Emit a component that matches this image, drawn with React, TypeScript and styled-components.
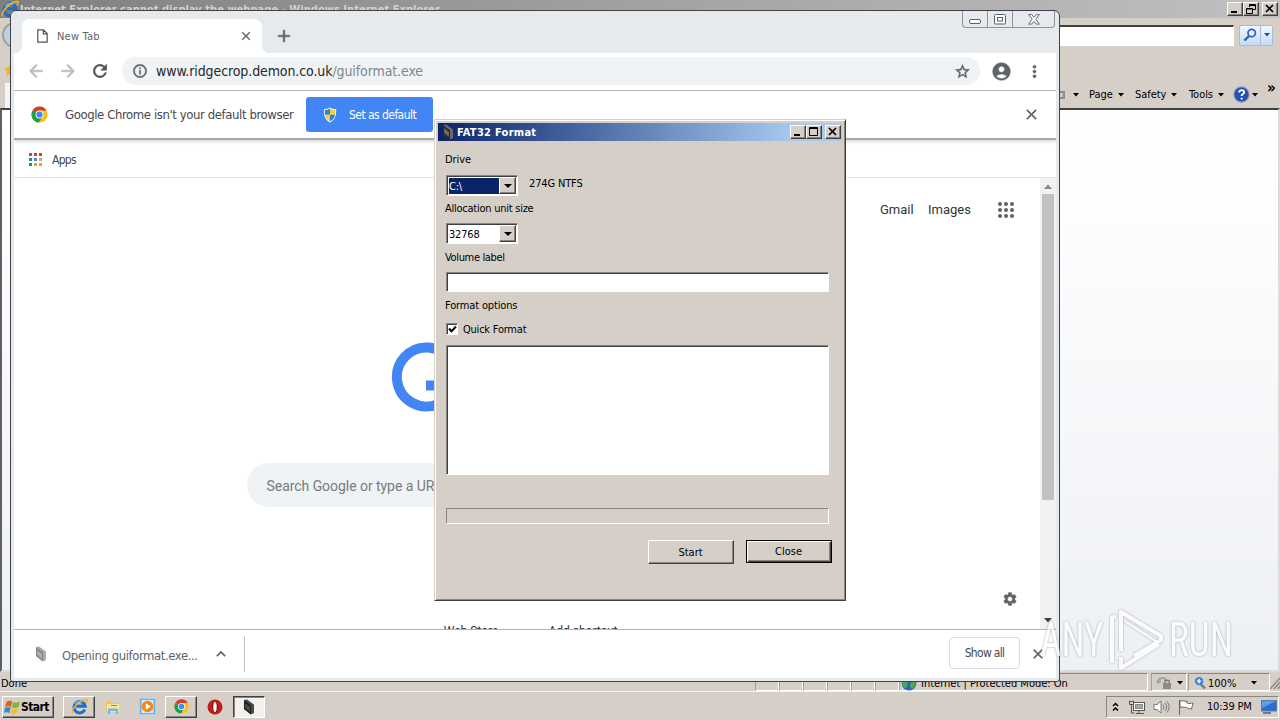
import React from 'react';
import styled, { createGlobalStyle, css } from 'styled-components';
import {
  MdAccountCircle,
  MdArrowBack,
  MdArrowForward,
  MdClose,
  MdAdd,
  MdInfoOutline,
  MdKeyboardArrowUp,
  MdMoreVert,
  MdRefresh,
  MdSettings,
  MdStarBorder,
} from 'react-icons/md';

const face = '#d6cfc8';

/* small drawings */
const IeIcon: React.FC<{ size: number }> = ({ size }) => (
  <svg width={size} height={size} viewBox="0 0 18 18">
    <path d="M14.600 12.200A6 6 0 1 1 15 8.600H5.500" fill="none" stroke="#1d6fd0" strokeWidth="3.200" />
    <path d="M4.200 6.500A5.500 5.500 0 0 1 12 4.500" fill="none" stroke="#6cc3f5" strokeWidth="1.200" />
    <path d="M1.600 16.400C-.4 13 8 2.400 16.400 1.400c1.400.2.6 2.600-.6 4" fill="none" stroke="#f0b323" strokeWidth="1.600" />
  </svg>
);

const ChromeIcon: React.FC<{ size: number }> = ({ size }) => (
  <svg width={size} height={size} viewBox="0 0 18 18">
    <circle cx="9" cy="9" r="8.500" fill="#fbc116" />
    <path d="M9 9L1.600 4.750A8.500 8.500 0 0 1 16.400 4.750H9z" fill="#db3b2b" />
    <path d="M1.640 4.750A8.500 8.500 0 0 0 8.200 17.500L12.400 11 9 9z" fill="#1e9e50" />
    <circle cx="9" cy="9" r="4.200" fill="#fff" />
    <circle cx="9" cy="9" r="3.300" fill="#4285f4" />
  </svg>
);

const ShieldIcon = () => (
  <svg width="14" height="16" viewBox="0 0 14 16">
    <path d="M7 .5C5 2 3 2 .8 2 .6 9 2 13 7 15.500 12 13 13.400 9 13.200 2 11 2 9 2 7 .5z" fill="#e8eef6" />
    <path d="M7 1.800v6H2C1.900 6.400 1.800 4.500 1.900 3 4 3 5.500 2.700 7 1.800z" fill="#2f7fd6" />
    <path d="M7 1.800v6h5c.1-1.400.2-3.300.1-4.800C10 3 8.500 2.700 7 1.800z" fill="#f7ce2d" />
    <path d="M2 7.800h5v6.500C4 12.800 2.400 10.500 2 7.800z" fill="#f7ce2d" />
    <path d="M12 7.800H7v6.500c3-1.500 4.600-3.800 5-6.500z" fill="#2f7fd6" />
  </svg>
);

const DriveIcon: React.FC<{ tone?: string; side?: string }> = ({ tone = '#4a4a4a', side = '#1c1c1c' }) => (
  <svg width="12" height="16" viewBox="0 0 12 16">
    <path d="M1 1l3-.5 7 5V14l-3 1.500-7-5.500z" fill={tone} />
    <path d="M1 1l7 5.500v9L1 10z" fill={side} />
    <path d="M2 4l5 4v5L2 9z" fill={tone} />
  </svg>
);

const FolderIcon = () => (
  <svg width="16" height="16" viewBox="0 0 16 16">
    <path d="M1 2h5l1 2h7v9H1z" fill="#efc94c" />
    <path d="M2 5h12v8H2z" fill="#f9e69a" />
    <path d="M3 15V9.500h10V15h-2.200v-3H5.200v3z" fill="#6cb7e8" />
    <path d="M6 6h6v1H6z" fill="#58a55c" />
  </svg>
);

const PlayerIcon = () => (
  <svg width="17" height="17" viewBox="0 0 17 17">
    <rect x=".5" y=".5" width="16" height="16" fill="#69b0e8" stroke="#a9d1ef" />
    <rect x="2.500" y="2" width="12" height="13" fill="#d9ecf9" />
    <circle cx="8.500" cy="8.500" r="5.800" fill="#f28a1a" />
    <path d="M6.800 5.300v6.400l5-3.200z" fill="#fff" />
  </svg>
);

const OperaIcon = () => (
  <svg width="16" height="16" viewBox="0 0 16 16">
    <circle cx="8" cy="8" r="7.500" fill="#c11b1b" />
    <ellipse cx="8" cy="8" rx="3" ry="5.600" fill="#8a0c0c" />
    <ellipse cx="8" cy="8" rx="1.700" ry="5" fill="#fff" />
  </svg>
);

const FlagIcon = () => (
  <svg width="17" height="16" viewBox="0 0 17 16">
    <path d="M2.500 3C4 1.300 6 1.300 8.500 2.500L7 8C5 7 3 7 1 8z" fill="#e2611d" />
    <path d="M9.400 2.900c2.500 1 4 1 6.600-.4L14.500 8c-2.300 1.300-4.200 1.300-6.500.4z" fill="#7db83a" />
    <path d="M.8 8.900C3 7.700 4.800 8 6.700 8.800L5.300 14C3 13 1.500 13.200 0 14z" fill="#3c87d0" />
    <path d="M7.700 9.300c2 .9 4 .9 6.500-.3l-1.500 5.300c-2.300 1.200-4.300 1.200-6.500.2z" fill="#f3c02c" />
  </svg>
);

const Caret = () => (
  <svg width="6" height="4" viewBox="0 0 6 4">
    <path d="M0 0h6L3 3.500z" fill="#000" />
  </svg>
);

const MinGlyph = () => <svg width="10" height="10"><path d="M1 7h6v2H1z" /></svg>;
const MaxGlyph = () => (
  <svg width="10" height="10" fill="none" stroke="#000"><path d="M.5.500h8v8h-8zM0 1.500h9" /></svg>
);
const CloseGlyph = () => (
  <svg width="10" height="10" fill="none" stroke="#000" strokeWidth="1.700"><path d="M1 1l7 7M8 1L1 8" /></svg>
);

const App: React.FC<{}> = () => (
  <Desktop>
    <GlobalStyle />

    {/* Internet Explorer */}
    <IeWindow>
      <IeTitle>
        <IeIcon size={18} />
        <IeCaption>Internet Explorer cannot display the webpage - Windows Internet Explorer</IeCaption>
        <MiniButton><MinGlyph /></MiniButton>
        <MiniButton>
          <svg width="11" height="10" viewBox="0 0 11 10" fill="none" stroke="#000">
            <path d="M3.500 3V.5h6v5H7M3 1.500h7" />
            <path d="M.5 4.500h6v5h-6zM.5 5h6" />
          </svg>
        </MiniButton>
        <MiniButton $gap><CloseGlyph /></MiniButton>
      </IeTitle>
      <IeAddress>
        <NavOrb />
        <IeField />
        <IeSearch>
          <SearchHalf $width={20}>
            <svg width="14" height="14" viewBox="0 0 14 14" fill="none" stroke="#2c5fc0">
              <circle cx="8.700" cy="5" r="3.700" strokeWidth="1.700" fill="#e4f0ff" />
              <path d="M6 8l-4.500 4.500" strokeWidth="2.400" />
            </svg>
          </SearchHalf>
          <SearchHalf $width={12}>
            <svg width="6" height="4" viewBox="0 0 6 4"><path d="M0 0h6L3 3.500z" fill="#1d4fae" /></svg>
          </SearchHalf>
        </IeSearch>
      </IeAddress>
      <FavRow>
        <svg width="10" height="12" viewBox="0 0 10 12"><path d="M6 0l2 4h4v3L9 8l1 4-4-2-4 2 1-4-3-4h4z" fill="#f2b52a" /></svg>
      </FavRow>
      <CommandRow>
        <IeTab />
        <Printer />
        <MenuItem $width={16}><Caret /></MenuItem>
        <MenuItem $width={46}>Page <Caret /></MenuItem>
        <MenuItem $width={54}>Safety <Caret /></MenuItem>
        <MenuItem $width={44}>Tools <Caret /></MenuItem>
        <MenuItem $width={34} $tight>
          <svg width="17" height="17" viewBox="0 0 16 16">
            <circle cx="8" cy="8" r="7.200" fill="#2850ae" stroke="#8f9cb9" />
            <path d="M5.800 6c0-3 4.600-2.600 4.600 0 0 1.600-2.300 1.600-2.300 3.400M8.100 11v1.800" fill="none" stroke="#fff" strokeWidth="1.800" />
          </svg>
          <Caret />
        </MenuItem>
        <More>»</More>
      </CommandRow>
      <IePage />
      <IeStatus>
        <DoneText>Done</DoneText>
        {[24, 24, 24, 24, 24, 24].map((w, i) => <StatusCell key={i} $width={w} />)}
        <StatusCell $width={249} $pad={1}>
          <svg width="16" height="16" viewBox="0 0 15 15">
            <circle cx="7.500" cy="7.500" r="7" fill="#2766b8" />
            <path d="M3 2c3-1 5 0 5 2S5 7 6 9s-2 4-3 3-2-3-2-5zM10 6l4 1-1 4-3 2-2-3z" fill="#51a852" />
          </svg>
          <ZoneText>Internet | Protected Mode: On</ZoneText>
        </StatusCell>
        <StatusCell $width={36} $pad={4} $gap={3}>
          <svg width="16" height="14" viewBox="0 0 16 14">
            <path d="M1 7C2 2 8 0 11 5M1 7l4-2" stroke="#a4a4a4" strokeWidth="2" fill="none" />
            <rect x="7" y="7" width="8" height="6" fill="#8b8b8b" />
            <path d="M9 7V4.500h4V7" stroke="#7a7a7a" fill="none" strokeWidth="1.300" />
          </svg>
          <Caret />
        </StatusCell>
        <StatusCell $width={82} $pad={5} $gap={1}>
          <svg width="12" height="14" viewBox="0 0 13 14">
            <path d="M7 8l5 5" stroke="#777" strokeWidth="2.500" />
            <circle cx="5.500" cy="5" r="4.500" fill="#3582d6" />
            <path d="M5.500 2.500v5M3 5h5" stroke="#fff" strokeWidth="1.500" />
          </svg>
          <ZoomText>100%</ZoomText>
          <Caret />
        </StatusCell>
        <svg width="10" height="14" viewBox="0 0 10 14" stroke="#8a857e" strokeWidth="1.500">
          <path d="M0 14L10 3M4 14l6-7M8 14l2-3" />
        </svg>
      </IeStatus>
    </IeWindow>

    {/* Chrome */}
    <ChromeWindow>
      <TabStrip>
        <Tab>
          <svg width="11" height="14" viewBox="0 0 11 14" fill="none" stroke="#505357" strokeWidth="1.200">
            <path d="M.8.8h5.700l3.700 3.700v8.700H.8zM6.300.8v4h4" />
          </svg>
          <TabTitle>New Tab</TabTitle>
          <MdClose size={14} />
        </Tab>
        <NewTab><MdAdd size={20} /></NewTab>
        <WindowControls>
          <Control $width={24}><MinimizeMark width="13" height="6"><rect x=".5" y=".5" width="11" height="4" rx="1.500" fill="#fff" stroke="#555c69" /></MinimizeMark></Control>
          <Control $width={25}>
            <svg width="12" height="11" fill="#fff" stroke="#555c69">
              <rect x=".5" y=".5" width="11" height="9.500" rx="1" />
              <rect x="3.500" y="3.500" width="5" height="3.500" />
            </svg>
          </Control>
          <Control $width={42}>
            <svg width="12" height="11" viewBox="0 0 12 11">
              <path d="M.7.600h3L6 3.300 8.300.600h3L7.800 5.300l3.500 4.800h-3L6 7.300l-2.300 2.800h-3l3.500-4.800z" fill="#fff" stroke="#555c69" strokeWidth=".9" />
            </svg>
          </Control>
        </WindowControls>
      </TabStrip>
      <Toolbar>
        <NavIcon $dim><MdArrowBack size={20} /></NavIcon>
        <NavIcon $dim><MdArrowForward size={20} /></NavIcon>
        <NavIcon><MdRefresh size={20} /></NavIcon>
        <Omnibox>
          <MdInfoOutline size={16} />
          <Url>www.ridgecrop.demon.co.uk<UrlPath>/guiformat.exe</UrlPath></Url>
          <MdStarBorder size={17} />
        </Omnibox>
        <MdAccountCircle size={21} />
        <MdMoreVert size={19} />
      </Toolbar>
      <InfoBar>
        <ChromeIcon size={17} />
        <InfoText>Google Chrome isn't your default browser</InfoText>
        <DefaultButton>
          <ShieldIcon />
          <span>Set as default</span>
        </DefaultButton>
        <InfoClose><MdClose size={17} /></InfoClose>
      </InfoBar>
      <Bookmarks>
        <svg width="14" height="14" viewBox="0 0 14 14">
          {['#d93a32', '#d93a32', '#d93a32', '#2f8f4e', '#4285f4', '#e0ab20', '#2f8f4e', '#e0ab20', '#e0ab20'].map((c, i) => (
            <rect key={i} x={(i % 3) * 5} y={Math.floor(i / 3) * 5} width="3" height="3" fill={c} />
          ))}
        </svg>
        <AppsText>Apps</AppsText>
      </Bookmarks>
      <PageArea>
        <NewTabPage>
          <TopLinks>
            <TopLink $width={33}>Gmail</TopLink>
            <TopLink $width={43}>Images</TopLink>
            <svg width="16" height="16" fill="#5f6368">
              {[2, 8, 14].map(y => [2, 8, 14].map(x => <circle key={`${x}-${y}`} cx={x} cy={y} r="2" />))}
            </svg>
          </TopLinks>
          <Logo viewBox="0 0 272 92">
            <path d="M59.500 22A29.500 29.500 0 1 0 63.600 47.500H35" fill="none" stroke="#4285f4" strokeWidth="9.900" />
          </Logo>
          <SearchBox>Search Google or type a URL</SearchBox>
          <Shortcuts>
            <Shortcut>Web Store</Shortcut>
            <Shortcut>Add shortcut</Shortcut>
          </Shortcuts>
          <Gear><MdSettings size={16} /></Gear>
        </NewTabPage>
        <ScrollBar>
          <svg width="8" height="5"><path d="M0 5l4-4.500L8 5z" fill="#8a8a8a" /></svg>
          <Thumb />
          <svg width="8" height="5"><path d="M0 0h8L4 4.500z" fill="#404040" /></svg>
        </ScrollBar>
      </PageArea>
      <Shelf>
        <DriveIcon tone="#ababab" side="#858585" />
        <ShelfText>Opening guiformat.exe...</ShelfText>
        <ShelfArrow><MdKeyboardArrowUp size={18} /></ShelfArrow>
        <ShowAll>Show all</ShowAll>
        <MdClose size={16} />
      </Shelf>
    </ChromeWindow>

    {/* FAT32 Format dialog */}
    <Dialog>
      <DialogTitle>
        <DriveIcon tone="#6d6963" side="#252525" />
        <DialogCaption>FAT32 Format</DialogCaption>
        <MiniButton><MinGlyph /></MiniButton>
        <MiniButton><MaxGlyph /></MiniButton>
        <MiniButton $gap><CloseGlyph /></MiniButton>
      </DialogTitle>
      <DialogBody>
        <FieldLabel $height={33} $top={11}>Drive</FieldLabel>
        <FieldRow>
          <Combo>
            <ComboValue $selected>C:\</ComboValue>
            <ComboArrow><svg width="8" height="4"><path d="M0 0h8L4 4z" /></svg></ComboArrow>
          </Combo>
          <DriveInfo>274G NTFS</DriveInfo>
        </FieldRow>
        <FieldLabel $height={27} $top={6} $spacing={-0.25}>Allocation unit size</FieldLabel>
        <FieldRow>
          <Combo>
            <ComboValue>32768</ComboValue>
            <ComboArrow><svg width="8" height="4"><path d="M0 0h8L4 4z" /></svg></ComboArrow>
          </Combo>
        </FieldRow>
        <FieldLabel $height={28} $top={7} $spacing={-0.35}>Volume label</FieldLabel>
        <Sunken $height={20} />
        <FieldLabel $height={28} $top={7} $spacing={-0.15}>Format options</FieldLabel>
        <CheckRow>
          <CheckBox>
            <svg width="9" height="9" viewBox="0 0 9 9"><path d="M1 3.500l2.500 2.700L8 1.500" fill="none" stroke="#000" strokeWidth="2" /></svg>
          </CheckBox>
          Quick Format
        </CheckRow>
        <Sunken $height={130} />
        <Progress />
        <Actions>
          <PushButton>Start</PushButton>
          <PushButton $focused>Close</PushButton>
        </Actions>
      </DialogBody>
    </Dialog>

    <Taskbar>
      <StartButton><FlagIcon />Start</StartButton>
      <TaskButton $raised><IeIcon size={17} /></TaskButton>
      <TaskButton><FolderIcon /></TaskButton>
      <TaskButton><PlayerIcon /></TaskButton>
      <TaskButton $raised><ChromeIcon size={15} /></TaskButton>
      <TaskButton><OperaIcon /></TaskButton>
      <TaskButton $pressed><DriveIcon /></TaskButton>
      <Tray>
        <svg width="7" height="10" viewBox="0 0 7 10" fill="none" stroke="#000" strokeWidth="1.500">
          <path d="M1 4l2.500-2.500L6 4M1 8.500L3.500 6 6 8.500" />
        </svg>
        <svg width="16" height="16" viewBox="0 0 16 16" fill="none" stroke="#555">
          <rect x="4.500" y="3.500" width="11" height="8" fill="#fff" />
          <rect x="6.500" y="5.500" width="7" height="4" fill="#a5a5a5" stroke="#888" />
          <path d="M7 14.500h8M10 12v2M.5 1.500v4h4v-4M.5 2.500h4M2.500 6v8h3" />
        </svg>
        <svg width="17" height="16" viewBox="0 0 17 16" fill="none" stroke="#777">
          <path d="M1 5.500h3L8 2v12l-4-3.500H1z" fill="#fff" />
          <path d="M10 5.500q2 2.500 0 5M12 4q3.500 4 0 8M14 2.500q4.500 5.500 0 11" />
        </svg>
        <svg width="16" height="16" viewBox="0 0 16 16" stroke="#666" fill="#fff">
          <path d="M1.500 1v15M2 2c3-1 4 1 7 0v2c2 1 4 0 6 0l-1.500 6c-3 0-4-1-5-1.500-3 0-3-1-6.500 0z" />
        </svg>
        <Clock>10:39 PM</Clock>
        <svg width="16" height="14" viewBox="0 0 16 14">
          <rect x=".5" y=".5" width="15" height="10.500" fill="#2a6fce" stroke="#5a7da8" />
          <path d="M1 1h14L1 8z" fill="#5c9de6" />
          <path d="M2 13h8" stroke="#49617d" strokeWidth="1.500" />
        </svg>
      </Tray>
    </Taskbar>

    <Watermark>
      <MarkText>ANY</MarkText>
      <svg width="58" height="66" viewBox="0 0 58 66" fill="none" stroke="#fff" strokeWidth="4" strokeLinejoin="round">
        <path d="M14 44V5l40 24v4L27 49" />
        <path d="M9 9L5 11v45" />
        <path d="M14 50v11l38-24" />
        <path d="M18 14l32 21" strokeWidth="2.500" />
      </svg>
      <MarkText>RUN</MarkText>
    </Watermark>
  </Desktop>
);

export default App;

/* Styling */
const GlobalStyle = createGlobalStyle`
  body {
    margin: 0;
    overflow: hidden;
  }
  * {
    box-sizing: border-box;
  }
  svg {
    display: block;
    flex: none;
  }
`;

const tahoma = css`
  font-family: Tahoma, 'DejaVu Sans Condensed', 'DejaVu Sans', sans-serif;
  font-stretch: condensed;
`;

const raised = css`
  border: 1px solid;
  border-color: #fff #404040 #404040 #fff;
  box-shadow: inset -1px -1px #8a857f;
`;

const sunken = css`
  border: 1px solid;
  border-color: #8a857f #fff #fff #8a857f;
`;

const Desktop = styled.div`
  ${tahoma}
  position: relative;
  width: 1280px;
  height: 720px;
  overflow: hidden;
  background: ${face};
  font-size: 11px;
  color: #000;
  white-space: nowrap;
`;

const IeWindow = styled.div`
  display: flex;
  flex-direction: column;
  width: 1280px;
  height: 692px;
`;

const IeTitle = styled.div`
  display: flex;
  align-items: center;
  height: 18px;
  padding: 0 2px 0 1px;
  background: linear-gradient(90deg, #7f7f7f, #a2a2a2 50%, #c0c0c0);
`;

const IeCaption = styled.div`
  flex: 1;
  padding-left: 1px;
  font-weight: bold;
  color: ${face};
  letter-spacing: 0.04px;
`;

const MiniButton = styled.div<{ $gap?: boolean }>`
  ${raised}
  display: flex;
  align-items: center;
  justify-content: center;
  width: 16px;
  height: 14px;
  margin-left: ${p => (p.$gap ? 3 : 0)}px;
  background: ${face};
`;

const IeAddress = styled.div`
  display: flex;
  align-items: center;
  height: 34px;
  padding: 0 7px 0 2px;
`;

const NavOrb = styled.div`
  width: 26px;
  height: 26px;
  border: 2px solid #98a0a8;
  border-radius: 50%;
  background: #c3cfdd;
`;

const IeField = styled.div`
  ${sunken}
  flex: 1;
  height: 21px;
  margin: 0 5px 0 40px;
  border-top: 2px solid #404040;
  background: #fff;
`;

const IeSearch = styled.div`
  display: flex;
  height: 21px;
  border: 1px solid #a8bcd8;
  border-radius: 2px;
  background: linear-gradient(#f2f7ff, #c4daf6);
`;

const SearchHalf = styled.div<{ $width: number }>`
  display: flex;
  align-items: center;
  justify-content: center;
  width: ${p => p.$width}px;
  & + & {
    border-left: 1px solid #a8bcd8;
  }
`;

const FavRow = styled.div`
  height: 30px;
  padding: 12px 0 0 4px;
`;

const CommandRow = styled.div`
  display: flex;
  align-items: center;
  height: 26px;
`;

const IeTab = styled.div`
  width: 100px;
  height: 25px;
  margin: 0 auto 0 5px;
  background: #f6f4f1;
`;

const Printer = styled.div`
  width: 9px;
  height: 8px;
  margin-right: 8px;
  border: 2px solid #8d8d8d;
  background: #c9c9c9;
`;

const MenuItem = styled.div<{ $width: number; $tight?: boolean }>`
  display: flex;
  align-items: center;
  gap: ${p => (p.$tight ? 2 : 5)}px;
  width: ${p => p.$width}px;
  margin-top: -2px;
  letter-spacing: -0.05px;
  & > svg:last-child {
    margin-top: 1px;
  }
`;

const More = styled.div`
  width: 13px;
  margin-top: -15px;
  font-size: 15px;
  font-weight: bold;
`;

const IePage = styled.div`
  flex: 1;
  border: 2px solid;
  border-color: #404040 #dedad5 #dedad5 #606060;
  background: linear-gradient(#fff, #fdfdfe 20%, #edf0f4);
`;

const IeStatus = styled.div`
  display: flex;
  align-items: center;
  height: 20px;
  border-bottom: 1px solid #f4f2ee;
`;

const DoneText = styled.div`
  flex: 1;
  padding: 3px 0 0 1px;
`;

const StatusCell = styled.div<{ $width: number; $pad?: number; $gap?: number }>`
  ${sunken}
  border-left-color: #a39e97;
  display: flex;
  align-items: center;
  gap: 4px;
  width: ${p => p.$width}px;
  height: 18px;
  margin-left: ${p => p.$gap || 0}px;
  padding: 3px 0 0 ${p => p.$pad || 0}px;
  & > svg:last-child:not(:first-child) {
    margin-left: 1px;
  }
`;

const ZoneText = styled.div`
  letter-spacing: 0;
`;

const ZoomText = styled.div`
  width: 38px;
  margin-left: -2px;
`;

const ChromeWindow = styled.div`
  position: absolute;
  z-index: 0;
  left: 10px;
  top: 10px;
  display: flex;
  flex-direction: column;
  width: 1050px;
  height: 672px;
  padding: 0 3px 3px;
  border: 1px solid #3f4349;
  border-radius: 6px 6px 3px 3px;
  background: #e7eaed;
  color: #5f6368;
  /* toolbar glyphs are drawn a little heavier than the package default */
  svg[stroke-width='0'] {
    stroke-width: 0.6px;
  }
  svg[stroke-width='0'] path[fill='none'] {
    stroke: none;
  }
`;

const TabStrip = styled.div`
  display: flex;
  align-items: flex-end;
  height: 42px;
  padding-left: 8px;
`;

const Tab = styled.div`
  position: relative;
  display: flex;
  align-items: center;
  width: 240px;
  height: 34px;
  padding: 0 9px 0 15px;
  border-radius: 8px 8px 0 0;
  background: #fff;
  /* outward curves at the foot of the tab */
  &::before,
  &::after {
    content: '';
    position: absolute;
    bottom: 0;
    width: 8px;
    height: 8px;
  }
  &::before {
    left: -8px;
    background: radial-gradient(circle at 0 0, transparent 8px, #fff 8.500px);
  }
  &::after {
    right: -8px;
    background: radial-gradient(circle at 100% 0, transparent 8px, #fff 8.500px);
  }
`;

const TabTitle = styled.div`
  flex: 1;
  padding-left: 9px;
  letter-spacing: 0.2px;
`;

const NewTab = styled.div`
  align-self: center;
  margin: 8px 0 0 12px;
`;

const WindowControls = styled.div`
  display: flex;
  align-self: flex-start;
  margin: 0 1px 0 auto;
  border: 1px solid #8d939b;
  border-top: 0;
  border-radius: 0 0 4px 4px;
`;

const Control = styled.div<{ $width: number }>`
  display: flex;
  align-items: center;
  justify-content: center;
  width: ${p => p.$width}px;
  height: 16px;
  & + & {
    border-left: 1px solid #8d939b;
  }
`;

const MinimizeMark = styled.svg`
  margin-top: 5px;
`;

const Toolbar = styled.div`
  display: flex;
  align-items: center;
  height: 38px;
  padding: 0 12px 1px;
  border-bottom: 1px solid #b1b1b1;
  background: #fff;
  & > svg + svg {
    margin-left: 13px;
  }
`;

const NavIcon = styled.div<{ $dim?: boolean }>`
  width: 32px;
  color: ${p => (p.$dim ? '#b9bbbe' : '#505357')};
`;

const Omnibox = styled.div`
  display: flex;
  align-items: center;
  flex: 1;
  height: 28px;
  margin-right: 11px;
  padding: 0 9px 0 10px;
  border-radius: 14px;
  background: #f0f3f5;
`;

const Url = styled.div`
  flex: 1;
  padding-left: 8px;
  font-size: 14px;
  color: #25282c;
  letter-spacing: -0.1px;
`;

const UrlPath = styled.span`
  color: #80868b;
`;

const InfoBar = styled.div`
  position: relative;
  z-index: 1;
  display: flex;
  align-items: center;
  height: 49px;
  padding: 0 16px 0 17px;
  border-bottom: 2px solid #a9a9a9;
  background: #fff;
  box-shadow: 0 2px 3px #ddd;
`;

const InfoText = styled.div`
  width: 242px;
  padding-left: 17px;
  font-size: 13px;
  color: #45484c;
  letter-spacing: -0.4px;
`;

const DefaultButton = styled.div`
  display: flex;
  align-items: center;
  gap: 12px;
  width: 127px;
  height: 35px;
  margin-left: 16px;
  padding-left: 17px;
  border-radius: 3px;
  background: #4285f4;
  color: #fff;
  font-size: 12px;
  letter-spacing: -0.55px;
`;

const InfoClose = styled.div`
  margin-left: auto;
`;

const Bookmarks = styled.div`
  display: flex;
  align-items: center;
  height: 38px;
  padding: 2px 0 0 15px;
  border-bottom: 1px solid #e2e4e6;
  background: #fff;
`;

const AppsText = styled.div`
  padding-left: 9px;
  font-size: 12px;
  color: #45484c;
  letter-spacing: -0.7px;
`;

const PageArea = styled.div`
  display: flex;
  height: 451px;
  background: #fff;
  overflow: hidden;
`;

const NewTabPage = styled.div`
  position: relative;
  display: flex;
  flex: 1;
  flex-direction: column;
  align-items: center;
  font-family: Roboto, sans-serif;
  font-stretch: normal;
  & > * {
    flex: none;
  }
`;

const TopLinks = styled.div`
  display: flex;
  align-self: flex-end;
  align-items: center;
  gap: 15px;
  height: 64px;
  padding-right: 26px;
  & > svg {
    margin-left: 12px;
  }
`;

const TopLink = styled.div<{ $width: number }>`
  width: ${p => p.$width}px;
  margin-top: -1px;
  font-size: 13px;
  color: #333;
`;

const Logo = styled.svg`
  width: 272px;
  height: 92px;
  margin-top: 96px;
`;

const SearchBox = styled.div`
  display: flex;
  align-items: center;
  width: 561px;
  height: 44px;
  margin-top: 33px;
  padding: 2px 0 0 20px;
  border-radius: 22px;
  background: #f0f3f5;
  font-size: 14px;
  letter-spacing: -0.05px;
  color: #767b80;
`;

const Shortcuts = styled.div`
  display: flex;
  width: 224px;
  margin-top: 117px;
  font-size: 12px;
  color: #333;
`;

const Shortcut = styled.div`
  width: 112px;
  text-align: center;
`;

const Gear = styled.div`
  position: absolute;
  right: 22px;
  bottom: 22px;
`;

const ScrollBar = styled.div`
  display: flex;
  flex-direction: column;
  align-items: center;
  width: 16px;
  padding: 6px 0 6px;
  background: #f1f1f1;
`;

const Thumb = styled.div`
  width: 12px;
  height: 306px;
  margin: 5px 0 auto;
  background: #c1c1c1;
`;

const Shelf = styled.div`
  display: flex;
  align-items: center;
  flex: 1;
  padding: 0 10px 0 21px;
  border-top: 1px solid #b1b1b1;
  background: #fff;
`;

const ShelfText = styled.div`
  width: 154px;
  padding: 3px 0 0 15px;
  font-size: 13px;
  letter-spacing: -0.42px;
`;

const ShelfArrow = styled.div`
  display: flex;
  align-items: center;
  width: 44px;
  height: 36px;
  margin: 0 auto 0 0;
  padding: 0 0 0 11px;
  border-right: 1px solid #c3c3c3;
`;

const ShowAll = styled.div`
  display: flex;
  align-items: center;
  justify-content: center;
  width: 71px;
  height: 32px;
  margin: 0 10px 2px 0;
  border: 1px solid #dadce0;
  border-radius: 4px;
  font-size: 12px;
  color: #45484c;
  letter-spacing: -0.7px;
`;

const Dialog = styled.div`
  position: absolute;
  left: 434px;
  top: 119px;
  width: 412px;
  height: 482px;
  padding: 2px;
  border: 1px solid;
  border-color: ${face} #404040 #404040 ${face};
  background: ${face};
  box-shadow: inset 1px 1px #fff, inset -1px -1px #8a857f;
`;

const DialogTitle = styled.div`
  display: flex;
  align-items: center;
  height: 18px;
  margin: 1px 1px 0;
  padding: 0 1px 0 4px;
  background: linear-gradient(90deg, #0a246a, #a6caf0 88%);
`;

const DialogCaption = styled.div`
  flex: 1;
  padding-left: 3px;
  font-weight: bold;
  color: #fff;
  letter-spacing: 0.28px;
`;

const DialogBody = styled.div`
  padding: 1px 14px 0 8px;
`;

const FieldLabel = styled.div<{ $height: number; $top: number; $spacing?: number }>`
  height: ${p => p.$height}px;
  padding-top: ${p => p.$top}px;
  line-height: 13px;
  letter-spacing: ${p => p.$spacing || -0.1}px;
`;

const FieldRow = styled.div`
  display: flex;
  height: 21px;
  padding-left: 1px;
`;

const Combo = styled.div`
  ${sunken}
  display: flex;
  width: 72px;
  height: 21px;
  padding: 1px;
  background: #fff;
  box-shadow: inset 1px 1px #404040;
`;

const ComboValue = styled.div<{ $selected?: boolean }>`
  flex: 1;
  height: 16px;
  margin: 1px 0 0 1px;
  line-height: 17px;
  letter-spacing: -0.2px;
  color: ${p => (p.$selected ? '#fff' : '#000')};
  background: ${p => (p.$selected ? '#0a246a' : '#fff')};
`;

const ComboArrow = styled.div`
  ${raised}
  display: flex;
  align-items: center;
  justify-content: center;
  width: 17px;
  background: ${face};
`;

const DriveInfo = styled.div`
  padding: 2px 0 0 11px;
  letter-spacing: -0.15px;
`;

const Sunken = styled.div<{ $height: number }>`
  ${sunken}
  height: ${p => p.$height}px;
  margin-left: 1px;
  background: #fff;
  box-shadow: inset 1px 1px #404040;
`;

const CheckRow = styled.div`
  display: flex;
  align-items: center;
  gap: 5px;
  height: 25px;
  padding: 0 0 7px 1px;
  letter-spacing: -0.22px;
`;

const CheckBox = styled.div`
  ${sunken}
  display: flex;
  align-items: center;
  justify-content: center;
  width: 12px;
  height: 12px;
  background: #fff;
  box-shadow: inset 1px 1px #404040;
`;

const Progress = styled.div`
  ${sunken}
  height: 16px;
  margin: 33px 0 0 1px;
`;

const Actions = styled.div`
  display: flex;
  justify-content: flex-end;
  gap: 12px;
  margin: 16px -3px 0 0;
`;

const PushButton = styled.div<{ $focused?: boolean }>`
  ${raised}
  display: flex;
  align-items: center;
  justify-content: center;
  width: 86px;
  height: ${p => (p.$focused ? 23 : 24)}px;
  padding-right: 1px;
  ${p => p.$focused && css`
    border: 1px solid #000;
    box-shadow: inset 1px 1px #fff, inset -1px -1px #404040, inset -2px -2px #8a857f;
  `}
`;

const Taskbar = styled.div`
  display: flex;
  align-items: center;
  height: 28px;
  padding: 1px 1px 0 2px;
`;

const StartButton = styled.div`
  ${raised}
  display: flex;
  align-items: center;
  width: 52px;
  height: 22px;
  margin-right: 9px;
  padding-left: 1px;
  font-size: 12px;
  font-weight: bold;
  letter-spacing: -0.6px;
`;

const TaskButton = styled.div<{ $raised?: boolean; $pressed?: boolean }>`
  display: flex;
  align-items: center;
  justify-content: center;
  width: 32px;
  height: 22px;
  margin-right: 2px;
  ${p => p.$raised && raised}
  ${p => p.$pressed && css`
    border: 1px solid;
    border-color: #404040 #fff #fff #404040;
    background: #f3f1ee;
    box-shadow: inset 1px 1px #8a857f;
  `}
`;

const Tray = styled.div`
  ${sunken}
  display: flex;
  align-items: center;
  gap: 8px;
  width: 173px;
  height: 22px;
  margin-left: auto;
  padding-left: 5px;
  & > svg:first-child {
    margin-right: 2px;
  }
`;

const Clock = styled.div`
  width: 46px;
  margin-left: 5px;
  letter-spacing: -0.2px;
`;

const Watermark = styled.div`
  position: absolute;
  left: 1040px;
  top: 607px;
  display: flex;
  align-items: center;
  gap: 4px;
  opacity: 0.75;
  filter: drop-shadow(0 0 1px #8a8e98);
`;

const MarkText = styled.div`
  width: 63px;
  font-family: Roboto, sans-serif;
  font-size: 49px;
  line-height: 66px;
  color: #fff;
  transform: scaleX(0.76);
  transform-origin: 0 50%;
`;
